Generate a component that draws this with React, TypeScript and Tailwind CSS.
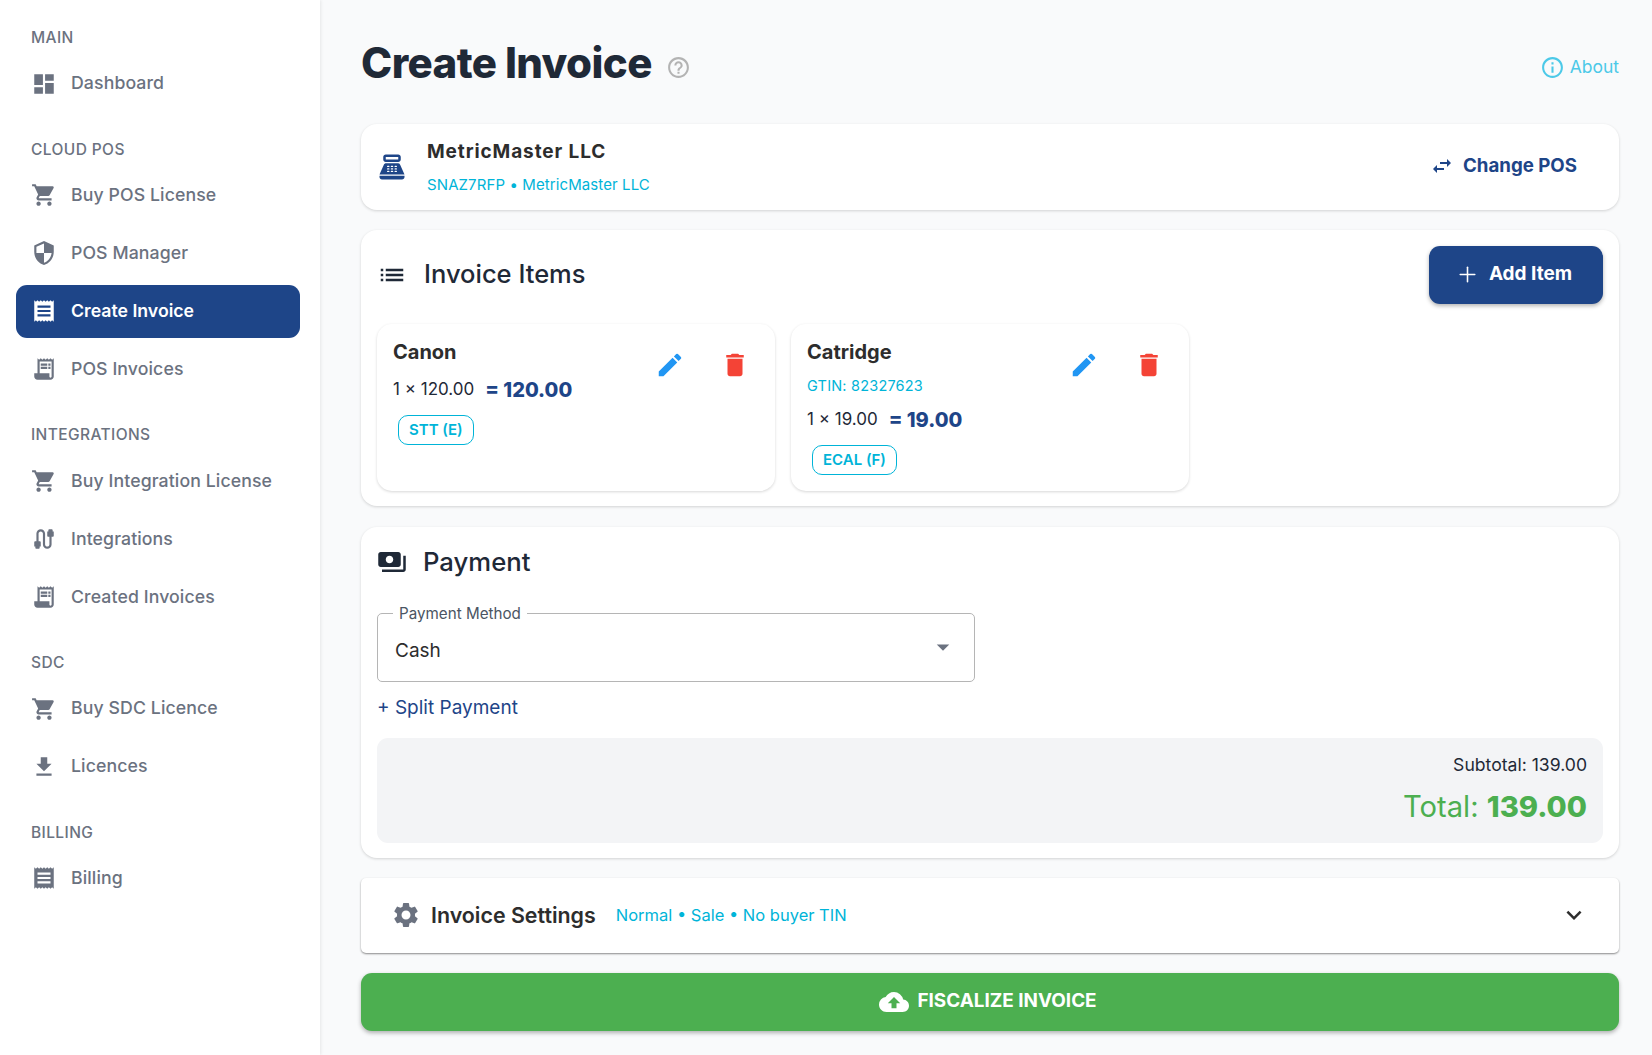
import type { ReactNode } from "react";
import { Plus } from "lucide-react";
import {
  MdArrowDropDown,
  MdCable,
  MdCloudUpload,
  MdDashboard,
  MdDelete,
  MdEdit,
  MdExpandMore,
  MdFileDownload,
  MdHelpOutline,
  MdInfoOutline,
  MdList,
  MdPayments,
  MdPointOfSale,
  MdReceipt,
  MdReceiptLong,
  MdSecurity,
  MdSettings,
  MdShoppingCart,
  MdSwapHoriz,
} from "react-icons/md";

const NAV = [
  { title: "MAIN", items: [{ icon: <MdDashboard size={26} />, label: "Dashboard" }] },
  {
    title: "CLOUD POS",
    items: [
      { icon: <MdShoppingCart size={26} />, label: "Buy POS License" },
      { icon: <MdSecurity size={26} />, label: "POS Manager" },
      { icon: <MdReceipt size={26} />, label: "Create Invoice", active: true },
      { icon: <MdReceiptLong size={26} />, label: "POS Invoices" },
    ],
  },
  {
    title: "INTEGRATIONS",
    items: [
      { icon: <MdShoppingCart size={26} />, label: "Buy Integration License" },
      { icon: <MdCable size={26} />, label: "Integrations" },
      { icon: <MdReceiptLong size={26} />, label: "Created Invoices" },
    ],
  },
  {
    title: "SDC",
    items: [
      { icon: <MdShoppingCart size={26} />, label: "Buy SDC Licence" },
      { icon: <MdFileDownload size={26} />, label: "Licences" },
    ],
  },
  { title: "BILLING", items: [{ icon: <MdReceipt size={26} />, label: "Billing" }] },
];

function Sidebar() {
  return (
    <aside className="w-[320px] shrink-0 bg-white pt-[27px] shadow-[1px_0_3px_rgba(0,0,0,0.08)] font-['Inter',sans-serif]">
      <div className="flex flex-col gap-[28.7px]">
        {NAV.map((section) => (
          <div key={section.title}>
            <div className="mb-[8px] h-[22px] pl-[31px] text-[15.5px] leading-[22px] font-medium tracking-[0.4px] text-[#6b7280]">
              {section.title}
            </div>
            <div className="flex flex-col gap-[5px]">
              {section.items.map((item) => (
                <div
                  key={item.label}
                  className={
                    item.active
                      ? "mr-[20px] ml-[16px] flex h-[53px] items-center gap-[14px] rounded-[11px] bg-[#1e4588] pl-[15px] text-[17.7px] font-semibold text-white"
                      : "mr-[20px] ml-[16px] flex h-[53px] items-center gap-[14px] pl-[15px] text-[17.7px] font-medium tracking-[0.1px] text-[#6b7280]"
                  }
                >
                  {item.icon}
                  <span>{item.label}</span>
                </div>
              ))}
            </div>
          </div>
        ))}
      </div>
    </aside>
  );
}

function Card({ children, className }: { children: ReactNode; className?: string }) {
  return (
    <section className={"rounded-[16px] bg-white shadow-[0_1px_3px_rgba(0,0,0,0.16)] " + (className ?? "")}>
      {children}
    </section>
  );
}

function ItemActions() {
  return (
    <div className="mt-[10px] flex gap-[35px] pr-[25px]">
      <MdEdit size={30} className="text-[#2196f3]" />
      <MdDelete size={30} className="text-[#f44336]" />
    </div>
  );
}

function Chip({ label }: { label: string }) {
  return (
    <span className="ml-[5px] inline-flex h-[30px] items-center rounded-[10px] border border-[#00b4d8] px-[10px] text-[15px] font-semibold text-[#00b4d8]">
      {label}
    </span>
  );
}

function Amount({ qty, total }: { qty: string; total: string }) {
  return (
    <div className="flex h-[26px] items-center gap-[11px]">
      <span className="text-[17px] text-[#1f2937]">{qty}</span>
      <span className="text-[20px] font-extrabold text-[#1e4588]">{total}</span>
    </div>
  );
}

export default function App() {
  return (
    <div className="flex min-h-[1055px] bg-[#f9fafb] font-['Inter',sans-serif]">
      <Sidebar />
      <main className="flex-1 pt-[40px] pr-[33px] pl-[41px]">
        <div className="mb-[34px] flex h-[50px] items-center justify-between">
          <div className="flex items-center gap-[14px]">
            <h1 className="-mt-[6px] text-[42px] font-extrabold tracking-[-0.6px] text-[#1f2937]">Create Invoice</h1>
            <MdHelpOutline size={25} className="mt-[4px] text-[#b3b3b3]" />
          </div>
          <div className="mt-[4px] flex items-center gap-[5px] text-[17.5px] text-[#4cc9e8]">
            <MdInfoOutline size={25} />
            <span className="mt-[1px]">About</span>
          </div>
        </div>

        <div className="flex flex-col gap-[21px]">
          <Card className="flex h-[86px] items-center justify-between pr-[42px] pl-[16px]">
            <div className="flex items-center gap-[20px]">
              <MdPointOfSale size={30} className="text-[#1e4588]" />
              <div className="mt-[2px]">
                <div className="-mt-[2px] text-[19px] leading-[26px] font-bold tracking-[0.9px] text-[#2d2d2d]">MetricMaster LLC</div>
                <div className="mt-[10px] text-[15px] leading-[20px] tracking-[0.1px] text-[#00b4d8]">SNAZ7RFP • MetricMaster LLC</div>
              </div>
            </div>
            <div className="-mt-[1px] flex items-center gap-[9px] text-[18.7px] font-bold text-[#1e4588]">
              <MdSwapHoriz size={24} />
              <span>Change POS</span>
            </div>
          </Card>

          <Card className="-mt-[1px] px-[16px] pt-[16px] pb-[15px]">
            <div className="mb-[20px] flex h-[58px] items-center justify-between">
              <div className="flex items-center gap-[17px] text-[25.5px] font-medium text-[#1f2937]">
                <MdList size={30} />
                <span className="-mt-[1px]">Invoice Items</span>
              </div>
              <button className="flex h-[58px] w-[174px] items-center justify-center gap-[9px] rounded-[11px] bg-[#1e4588] pr-[5px] pb-[1px] text-[19px] font-bold text-white shadow-[0_2px_4px_rgba(0,0,0,0.3)]">
                <Plus size={25} strokeWidth={1.5} />
                <span>Add Item</span>
              </button>
            </div>
            <div className="grid grid-cols-3 gap-[16px]">
              <div className="flex h-[167px] justify-between rounded-[15px] pt-[16px] pl-[16px] shadow-[0_1px_3px_rgba(0,0,0,0.16)]">
                <div>
                  <div className="text-[20px] leading-[24px] font-bold text-[#2d2d2d]">Canon</div>
                  <div className="mt-[13px]">
                    <Amount qty="1 × 120.00" total="= 120.00" />
                  </div>
                  <div className="mt-[12px]">
                    <Chip label="STT (E)" />
                  </div>
                </div>
                <ItemActions />
              </div>
              <div className="flex h-[167px] justify-between rounded-[15px] pt-[16px] pl-[16px] shadow-[0_1px_3px_rgba(0,0,0,0.16)]">
                <div>
                  <div className="text-[20px] leading-[24px] font-bold text-[#2d2d2d]">Catridge</div>
                  <div className="mt-[12px] text-[14.5px] leading-[20px] tracking-[0.2px] text-[#00b4d8]">GTIN: 82327623</div>
                  <div className="mt-[11px]">
                    <Amount qty="1 × 19.00" total="= 19.00" />
                  </div>
                  <div className="mt-[12px]">
                    <Chip label="ECAL (F)" />
                  </div>
                </div>
                <ItemActions />
              </div>
            </div>
          </Card>

          <Card className="px-[16px] pt-[20px] pb-[15px]">
            <div className="flex h-[30px] items-center gap-[16px] text-[25.7px] font-medium text-[#1f2937]">
              <MdPayments size={30} />
              <span>Payment</span>
            </div>
            <div className="relative mt-[36px] flex h-[69px] w-[598px] items-center justify-between rounded-[5px] border border-[#b5b5b5] pr-[16px] pl-[17px]">
              <span className="absolute top-[-10px] left-[15px] bg-white px-[6px] text-[15.2px] leading-[20px] text-[#4b5563]">
                Payment Method
              </span>
              <span className="mt-[8px] text-[19px] text-[#2d2d2d]">Cash</span>
              <MdArrowDropDown size={30} className="-mt-[1px] text-[#6b7280]" />
            </div>
            <div className="mt-[14px] h-[24px] text-[19px] leading-[24px] text-[#1e4588]">+ Split Payment</div>
            <div className="mt-[18px] flex h-[105px] flex-col items-end rounded-[11px] bg-[#f3f4f6] pt-[15px] pr-[16px]">
              <div className="text-[17.6px] leading-[24px] text-[#1f2937]">Subtotal: 139.00</div>
              <div className="mt-[8px] text-[29.2px] leading-[44px] text-[#4caf50]">
                Total: <span className="font-extrabold">139.00</span>
              </div>
            </div>
          </Card>

          <section className="-mt-[1px] flex h-[75px] items-center justify-between rounded-[5px] bg-white pr-[30px] pl-[30px] shadow-[0_1px_2px_rgba(0,0,0,0.45)]">
            <div className="flex items-center">
              <MdSettings size={30} className="text-[#6b7280]" />
              <span className="ml-[10px] text-[21.4px] font-semibold text-[#2d2d2d]">Invoice Settings</span>
              <span className="ml-[20px] text-[16.5px] text-[#00b4d8]">Normal • Sale • No buyer TIN</span>
            </div>
            <MdExpandMore size={30} className="-mt-[1px] text-[#2d2d2d]" />
          </section>

          <button className="-mt-[1px] flex h-[58px] items-center justify-center gap-[8px] rounded-[11px] bg-[#4caf50] pr-[4px] pb-[1px] text-[18.9px] font-bold text-white shadow-[0_2px_4px_rgba(0,0,0,0.3)]">
            <MdCloudUpload size={30} />
            <span>FISCALIZE INVOICE</span>
          </button>
        </div>
      </main>
    </div>
  );
}
